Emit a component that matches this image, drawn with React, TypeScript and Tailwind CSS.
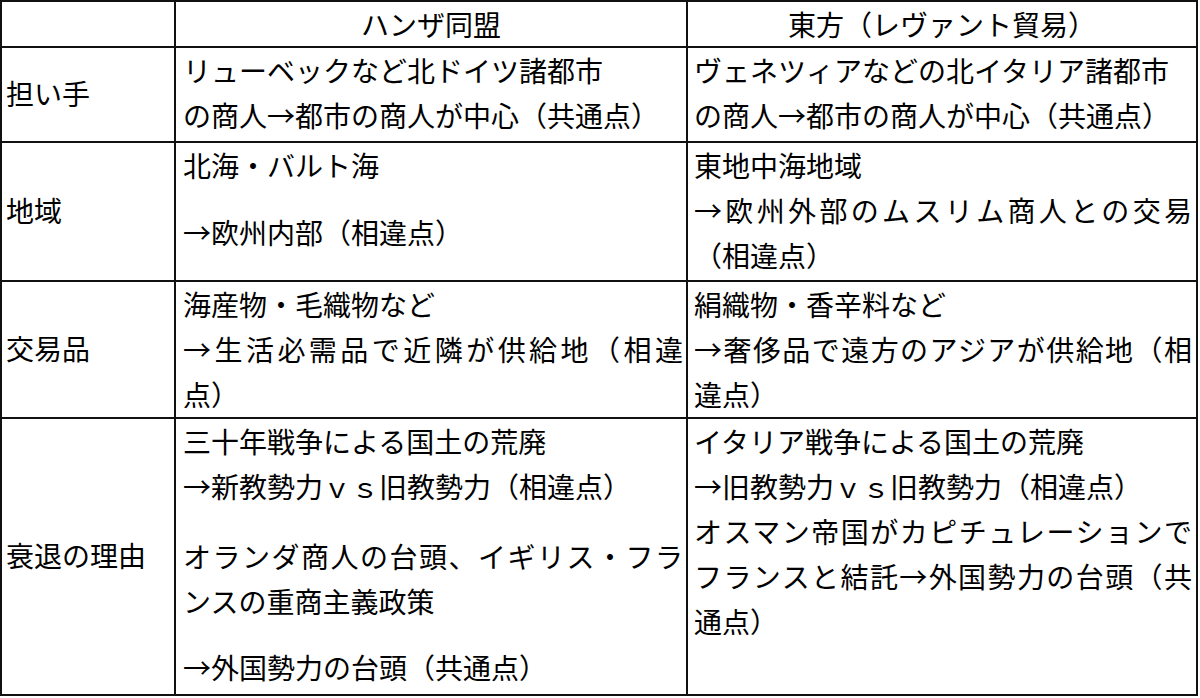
const font = { fontFamily: '"Noto Sans CJK JP", "Noto Sans", sans-serif' }

type Ln = { text?: string; justify?: boolean; gap?: number }

function Line({ text, justify }: { text: string; justify?: boolean }) {
  return (
    <div
      className={`whitespace-nowrap [text-spacing-trim:space-all] ${
        justify ? 'text-justify [text-align-last:justify] [text-justify:inter-character]' : 'text-left'
      }`}
    >
      {text}
    </div>
  )
}

function Cell({ lines, first }: { lines: Ln[]; first?: boolean }) {
  return (
    <div className={`bg-white overflow-hidden ${first ? 'pl-[6px] pr-[4px]' : 'pl-[7px] pr-[3px]'}`}>
      {lines.map((l, i) =>
        l.gap ? (
          <div key={i} style={{ height: l.gap }} />
        ) : (
          <Line key={i} text={l.text ?? ''} justify={l.justify} />
        ),
      )}
    </div>
  )
}

function Label({ text }: { text: string }) {
  return <div className="bg-white flex items-center pl-[4px] pb-[3px]">{text}</div>
}

const rows: { label: string; hansa: Ln[]; east: Ln[] }[] = [
  {
    label: '担い手',
    hansa: [{ text: 'リューベックなど北ドイツ諸都市' }, { text: 'の商人→都市の商人が中心（共通点）' }],
    east: [{ text: 'ヴェネツィアなどの北イタリア諸都市' }, { text: 'の商人→都市の商人が中心（共通点）' }],
  },
  {
    label: '地域',
    hansa: [{ text: '北海・バルト海' }, { gap: 22 }, { text: '→欧州内部（相違点）' }],
    east: [
      { text: '東地中海地域' },
      { text: '→欧州外部のムスリム商人との交易', justify: true },
      { text: '（相違点）' },
    ],
  },
  {
    label: '交易品',
    hansa: [
      { text: '海産物・毛織物など' },
      { text: '→生活必需品で近隣が供給地（相違', justify: true },
      { text: '点）' },
    ],
    east: [
      { text: '絹織物・香辛料など' },
      { text: '→奢侈品で遠方のアジアが供給地（相', justify: true },
      { text: '違点）' },
    ],
  },
  {
    label: '衰退の理由',
    hansa: [
      { text: '三十年戦争による国土の荒廃' },
      { text: '→新教勢力ｖｓ旧教勢力（相違点）' },
      { gap: 25 },
      { text: 'オランダ商人の台頭、イギリス・フラ', justify: true },
      { text: 'ンスの重商主義政策' },
      { gap: 21 },
      { text: '→外国勢力の台頭（共通点）' },
    ],
    east: [
      { text: 'イタリア戦争による国土の荒廃' },
      { text: '→旧教勢力ｖｓ旧教勢力（相違点）' },
      { text: 'オスマン帝国がカピチュレーションで', justify: true },
      { text: 'フランスと結託→外国勢力の台頭（共', justify: true },
      { text: '通点）' },
    ],
  },
]

export default function App() {
  return (
    <div className="w-[1200px] h-[698px] bg-white" style={font}>
      <div className="w-[1198px] grid grid-cols-[172px_510px_508px] grid-rows-[44px_93px_137px_135px_275px] gap-[2px] p-[2px] bg-[#111] text-[28px] leading-[45px] text-black">
        <div className="bg-white" />
        <div className="bg-white flex items-center justify-center">ハンザ同盟</div>
        <div className="bg-white flex items-center justify-center [text-spacing-trim:space-all]">東方（レヴァント貿易）</div>
        {rows.map((r) => (
          <Row key={r.label} label={r.label} hansa={r.hansa} east={r.east} />
        ))}
      </div>
    </div>
  )
}

function Row({ label, hansa, east }: { label: string; hansa: Ln[]; east: Ln[] }) {
  return (
    <>
      <Label text={label} />
      <Cell lines={hansa} />
      <Cell lines={east} first />
    </>
  )
}
